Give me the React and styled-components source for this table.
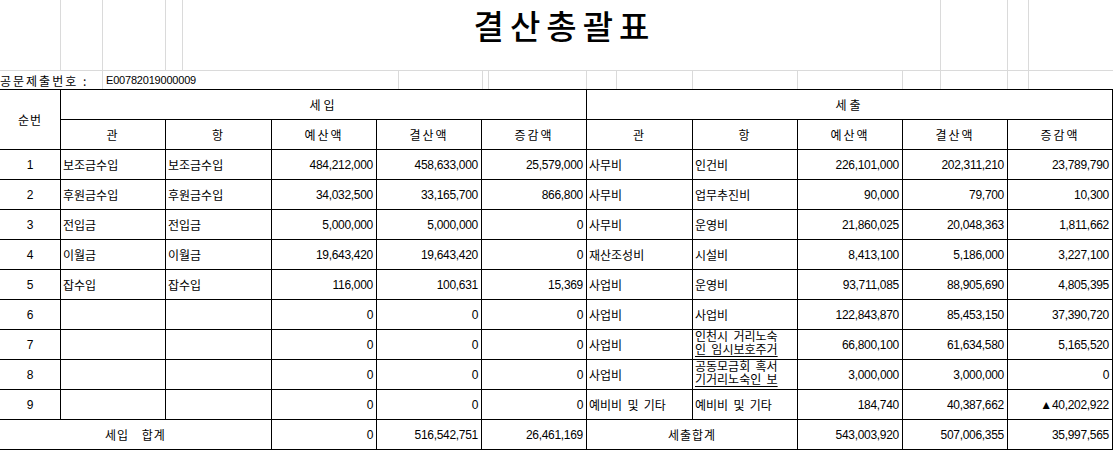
import styled, { createGlobalStyle } from "styled-components";

const GlobalStyle = createGlobalStyle`
    body {
        margin: 0;
        background: #fff;
    }
`;

const GRID = "#dadada";
const LINE = "#000";

const Sheet = styled.div`
    width: 1113px;
    font-family: "Liberation Sans", "Noto Sans CJK KR", sans-serif;
    color: #000;
`;

const GridRow = styled.div`
    display: grid;
    grid-template-columns: ${(p) => p.$cols};
    height: ${(p) => p.$height}px;
`;

const GridCell = styled.div`
    box-sizing: border-box;
    border-right: ${(p) => (p.$line ? `1px solid ${GRID}` : "none")};
    border-bottom: ${(p) => (p.$bottom ? `1px solid ${GRID}` : "none")};
    display: flex;
    align-items: center;
    overflow: visible;
    white-space: nowrap;
`;

const TitleCell = styled(GridCell)`
    justify-content: center;
    align-items: flex-start;
    padding: 8px 0 0 6px;
    font-family: "Noto Sans CJK KR", sans-serif;
    font-size: 33px;
    font-weight: 500;
    line-height: 35px;
    letter-spacing: 6px;
`;

const InfoLabel = styled(GridCell)`
    font-family: "Noto Sans CJK KR", sans-serif;
    font-size: 12px;
    letter-spacing: 2px;
`;

const InfoValue = styled(GridCell)`
    padding-left: 3px;
    font-size: 11px;
    letter-spacing: -0.2px;
`;

const Table = styled.div`
    display: grid;
    grid-template-columns: 61px 105px 106px 105px 105px 105px 106px 105px 105px 105px 105px;
    grid-auto-rows: 30px;
    border-top: 1px solid ${LINE};
`;

const Cell = styled.div`
    box-sizing: border-box;
    border-right: 1px solid ${LINE};
    border-bottom: 1px solid ${LINE};
    grid-column: span ${(p) => p.$span || 1};
    grid-row: span ${(p) => p.$rows || 1};
    display: flex;
    align-items: center;
    justify-content: ${(p) =>
        p.$align === "right" ? "flex-end" : p.$align === "left" ? "flex-start" : "center"};
    padding: ${(p) => (p.$align === "right" ? "0 3px 0 0" : p.$align === "left" ? "0 0 0 2px" : "0")};
    font-size: 12px;
    letter-spacing: ${(p) => (p.$num ? -0.3 : p.$spacing || 0)}px;
    word-spacing: 2px;
    white-space: nowrap;
    overflow: hidden;
`;

const WrapCell = styled(Cell)`
    flex-direction: column;
    align-items: flex-start;
    justify-content: flex-start;
    line-height: 13px;
    padding-top: 1px;
`;

const Line = styled.span`
    display: block;
    text-decoration: ${(p) => (p.$under ? "underline" : "none")};
    text-underline-offset: 2px;
`;

const titleCols = "61px 42px 63px 17px 758px 67px 21px 84px";
const infoCols = "103px 296px 84px 6px 98px 30px 76px 105px 105px 38px 67px 21px 84px";

const income = [
    ["보조금수입", "보조금수입", "484,212,000", "458,633,000", "25,579,000"],
    ["후원금수입", "후원금수입", "34,032,500", "33,165,700", "866,800"],
    ["전입금", "전입금", "5,000,000", "5,000,000", "0"],
    ["이월금", "이월금", "19,643,420", "19,643,420", "0"],
    ["잡수입", "잡수입", "116,000", "100,631", "15,369"],
    ["", "", "0", "0", "0"],
    ["", "", "0", "0", "0"],
    ["", "", "0", "0", "0"],
    ["", "", "0", "0", "0"],
];

const expense = [
    ["사무비", "인건비", "226,101,000", "202,311,210", "23,789,790"],
    ["사무비", "업무추진비", "90,000", "79,700", "10,300"],
    ["사무비", "운영비", "21,860,025", "20,048,363", "1,811,662"],
    ["재산조성비", "시설비", "8,413,100", "5,186,000", "3,227,100"],
    ["사업비", "운영비", "93,711,085", "88,905,690", "4,805,395"],
    ["사업비", "사업비", "122,843,870", "85,453,150", "37,390,720"],
    ["사업비", ["인천시 거리노숙", "인 임시보호주거"], "66,800,100", "61,634,580", "5,165,520"],
    ["사업비", ["공동모금회 혹서", "기거리노숙인 보"], "3,000,000", "3,000,000", "0"],
    ["예비비 및 기타", "예비비 및 기타", "184,740", "40,387,662", "▲40,202,922"],
];

const Item = ({ value }) =>
    Array.isArray(value) ? (
        <WrapCell $align="left">
            <Line>{value[0]}</Line>
            <Line $under>{value[1]}</Line>
        </WrapCell>
    ) : (
        <Cell $align="left">{value}</Cell>
    );

const App = () => {
    return (
        <Sheet>
            <GlobalStyle />
            <GridRow $cols={titleCols} $height={71}>
                <GridCell $line $bottom />
                <GridCell $line $bottom />
                <GridCell $line $bottom />
                <GridCell $line $bottom />
                <TitleCell $line $bottom>결산총괄표</TitleCell>
                <GridCell $line $bottom />
                <GridCell $line $bottom />
                <GridCell $bottom />
            </GridRow>
            <GridRow $cols={infoCols} $height={18}>
                <InfoLabel $line>공문제출번호 :</InfoLabel>
                <InfoValue $line>E00782019000009</InfoValue>
                {infoCols
                    .split(" ")
                    .slice(2)
                    .map((_, i, arr) => (
                        <GridCell key={i} $line={i < arr.length - 1} />
                    ))}
            </GridRow>
            <Table>
                <Cell $rows={2} $spacing={1}>순번</Cell>
                <Cell $span={5} $spacing={3}>세입</Cell>
                <Cell $span={5} $spacing={3}>세출</Cell>
                {["관", "항", "예산액", "결산액", "증감액", "관", "항", "예산액", "결산액", "증감액"].map(
                    (h, i) => (
                        <Cell key={i} $spacing={2}>
                            {h}
                        </Cell>
                    )
                )}
                {income.map((row, i) => {
                    const out = expense[i];
                    return [
                        <Cell key={`n${i}`} $num>{i + 1}</Cell>,
                        <Item key={`a${i}`} value={row[0]} />,
                        <Item key={`b${i}`} value={row[1]} />,
                        <Cell key={`c${i}`} $num $align="right">{row[2]}</Cell>,
                        <Cell key={`d${i}`} $num $align="right">{row[3]}</Cell>,
                        <Cell key={`e${i}`} $num $align="right">{row[4]}</Cell>,
                        <Item key={`f${i}`} value={out[0]} />,
                        <Item key={`g${i}`} value={out[1]} />,
                        <Cell key={`h${i}`} $num $align="right">{out[2]}</Cell>,
                        <Cell key={`j${i}`} $num $align="right">{out[3]}</Cell>,
                        <Cell key={`k${i}`} $num $align="right">{out[4]}</Cell>,
                    ];
                })}
                <Cell $span={3} $spacing={1}>세입&nbsp;&nbsp;합계</Cell>
                <Cell $num $align="right">0</Cell>
                <Cell $num $align="right">516,542,751</Cell>
                <Cell $num $align="right">26,461,169</Cell>
                <Cell $span={2} $spacing={1}>세출합계</Cell>
                <Cell $num $align="right">543,003,920</Cell>
                <Cell $num $align="right">507,006,355</Cell>
                <Cell $num $align="right">35,997,565</Cell>
            </Table>
        </Sheet>
    );
};

export default App;
